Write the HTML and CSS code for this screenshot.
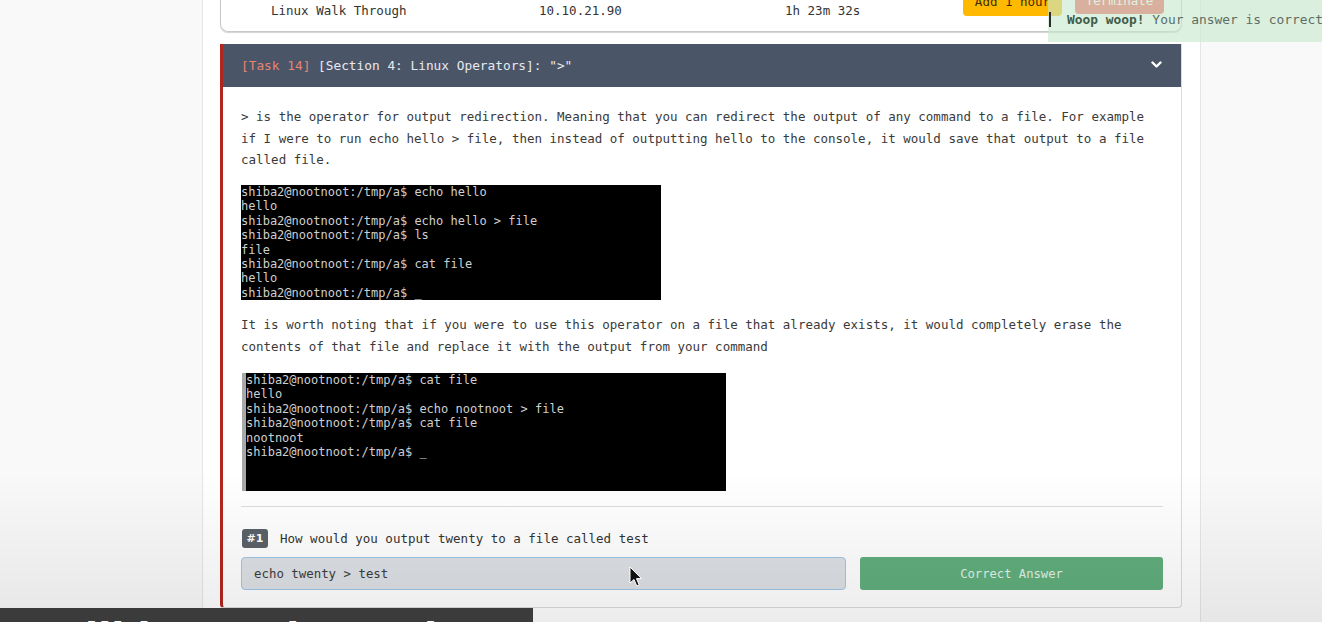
FILE: index.html
```html
<!DOCTYPE html>
<html lang="en">
<head>
<meta charset="utf-8">
<title>Task 14 - Linux Operators</title>
<link rel="stylesheet" href="styles.css">
</head>
<body>
<div class="page">
  <main class="main">
    <div class="machine-card">
      <span class="machine-name">Linux Walk Through</span>
      <span class="machine-ip">10.10.21.90</span>
      <span class="machine-time">1h 23m 32s</span>
      <div class="machine-actions">
        <button class="btn-add">Add 1 hour</button>
        <button class="btn-term">Terminate</button>
      </div>
    </div>

    <section class="task">
      <header class="task-head">
        <div class="task-title"><span class="task-no">[Task 14]</span> [Section 4: Linux Operators]: "&gt;"</div>
        <svg class="chev" width="11" height="8" viewBox="0 0 11 8"><path d="M1.5 1.5 L5.5 5.5 L9.5 1.5" fill="none" stroke="#ffffff" stroke-width="2.4" stroke-linecap="round" stroke-linejoin="round"/></svg>
      </header>
      <div class="task-body">
        <p class="para">&gt; is the operator for output redirection. Meaning that you can redirect the output of any command to a file. For example if I were to run echo hello &gt; file, then instead of outputting hello to the console, it would save that output to a file called file.</p>
        <pre class="term term-1">shiba2@nootnoot:/tmp/a$ echo hello
hello
shiba2@nootnoot:/tmp/a$ echo hello &gt; file
shiba2@nootnoot:/tmp/a$ ls
file
shiba2@nootnoot:/tmp/a$ cat file
hello
shiba2@nootnoot:/tmp/a$ _</pre>
        <p class="para para-2">It is worth noting that if you were to use this operator on a file that already exists, it would completely erase the contents of that file and replace it with the output from your command</p>
        <pre class="term term-2">shiba2@nootnoot:/tmp/a$ cat file
hello
shiba2@nootnoot:/tmp/a$ echo nootnoot &gt; file
shiba2@nootnoot:/tmp/a$ cat file
nootnoot
shiba2@nootnoot:/tmp/a$ _</pre>
        <div class="sep"></div>
        <div class="question">
          <span class="q-badge">#1</span>
          <span class="q-text">How would you output twenty to a file called test</span>
        </div>
        <div class="answer-row">
          <div class="answer-input">echo twenty &gt; test</div>
          <button class="answer-btn">Correct Answer</button>
        </div>
      </div>
    </section>
  </main>
</div>

<div class="toast"><span class="toast-bar"></span><b>Woop woop!</b> Your answer is correct</div>

<div class="shade"></div>

<svg class="cursor" width="14" height="22" viewBox="0 0 14 22"><path d="M1 1 L1 17 L5 13.5 L7.8 20 L10.2 19 L7.5 12.6 L12.5 12.6 Z" fill="#111" stroke="#fff" stroke-width="1"/></svg>

<div class="caption"><span class="caption-text">will let me just take</span></div>
</body>
</html>
```

FILE: styles.css
```css
* { box-sizing: border-box; }

html, body {
  margin: 0;
  padding: 0;
  width: 1322px;
  height: 622px;
  overflow: hidden;
  background: #f9f9f9;
  font-family: "DejaVu Sans Mono", "Liberation Mono", monospace;
  color: #363636;
}

.page {
  display: flex;
  padding-left: 202px;
  height: 622px;
}

.main {
  width: 999px;
  height: 640px;
  background: #ffffff;
  border-left: 1px solid #e6e6e6;
  border-right: 1px solid #e6e6e6;
  padding: 0 18px 0 17px;
}

/* machine card */
.machine-card {
  margin-top: -30px;
  height: 62px;
  border: 1px solid #c9c9c9;
  border-top: none;
  border-radius: 0 0 8px 8px;
  box-shadow: 0 1px 1px rgba(0,0,0,0.18);
  display: grid;
  grid-template-columns: 268px 246px 178px 1fr;
  align-items: end;
  padding: 0 0 9px 50px;
  font-size: 12.5px;
  color: #333;
}
.machine-card > span { line-height: 22px; }
.machine-actions {
  display: flex;
  align-items: flex-start;
  gap: 13px;
  align-self: end;
  margin-bottom: 6px;
}
.btn-add, .btn-term {
  font-family: "DejaVu Sans Mono", monospace;
  font-size: 12.5px;
  border: none;
  border-radius: 4px;
  height: 30px;
  padding: 0;
}
.btn-add {
  width: 99px;
  background: #ffb900;
  color: #3a2d00;
}
.btn-term {
  width: 89px;
  height: 28px;
  background: #f4554c;
  color: #ffffff;
}

/* task panel */
.task {
  margin-top: 12px;
  border-left: 3px solid #b3261e;
  border-right: 1px solid #dcdcdc;
  border-bottom: 1px solid #dcdcdc;
  border-radius: 0 0 4px 4px;
  background: #ffffff;
}
.task-head {
  height: 43px;
  background: #4b5568;
  display: flex;
  align-items: center;
  justify-content: space-between;
  padding: 0 19px 0 18px;
}
.task-title {
  font-size: 12.8px;
  color: #e7e9ef;
}
.task-no { color: #e5856f; }
.chev { display: block; margin-top: -2px; }

.task-body {
  padding: 19px 18px 17px 18px;
}
.para {
  margin: 0;
  font-size: 12.5px;
  line-height: 21.5px;
  color: #3a3a3a;
}
.para-2 { margin-top: 14px; }

.term {
  margin: 14.5px 0 0 0;
  background: #000000;
  color: #cfcfcf;
  font-family: "DejaVu Sans Mono", monospace;
  font-size: 12px;
  line-height: 14.4px;
  white-space: pre;
  overflow: hidden;
}
.term-1 {
  width: 420px;
  height: 115px;
  padding: 0;
}
.term-2 {
  margin-top: 16px;
  margin-left: 1px;
  width: 484px;
  height: 118px;
  border-left: 4px solid #a8a8a8;
  padding: 0;
  margin-bottom: 0;
}

.sep {
  margin-top: 15px;
  height: 1px;
  background: #dedede;
}

.question {
  margin-top: 22px;
  display: flex;
  align-items: center;
  gap: 12px;
}
.q-badge {
  margin-left: 1px;
  width: 26px;
  height: 19px;
  background: #5b6168;
  color: #ffffff;
  font-family: "DejaVu Sans", sans-serif;
  font-weight: bold;
  font-size: 11px;
  border-radius: 3px;
  display: flex;
  align-items: center;
  justify-content: center;
}
.q-text {
  font-size: 12.5px;
  color: #333;
}

.answer-row {
  margin-top: 9px;
  display: flex;
  gap: 14px;
}
.answer-input {
  width: 605px;
  height: 33px;
  background: #dde0e4;
  border: 1px solid #9fc6e8;
  border-radius: 4px;
  padding: 0 12px;
  display: flex;
  align-items: center;
  font-size: 12.4px;
  color: #3c3c3c;
}
.answer-btn {
  flex: 1;
  height: 33px;
  border: none;
  border-radius: 3px;
  background: #60ae7c;
  color: #e3f2e7;
  font-family: "DejaVu Sans Mono", monospace;
  font-size: 12.2px;
}

/* overlays */
.toast {
  position: absolute;
  left: 1048px;
  top: 0;
  width: 274px;
  height: 42px;
  background: rgba(200, 232, 206, 0.62);
  font-size: 12.9px;
  color: #5c6e62;
  padding: 12px 0 0 19px;
  white-space: nowrap;
  overflow: hidden;
}
.toast b { color: #3f5d49; }
.toast-bar {
  position: absolute;
  left: 1px;
  top: 12px;
  width: 2px;
  height: 15px;
  background: #2c2c2c;
}

.shade {
  position: absolute;
  left: 0;
  top: 0;
  width: 1322px;
  height: 622px;
  pointer-events: none;
  background: linear-gradient(to bottom, rgba(0,0,0,0) 0px, rgba(0,0,0,0) 470px, rgba(0,0,0,0.075) 622px);
}

.cursor {
  position: absolute;
  left: 629px;
  top: 566px;
}

.caption {
  position: absolute;
  left: 0;
  top: 608px;
  width: 533px;
  height: 14px;
  background: #3b3b3b;
  overflow: hidden;
}
.caption-text {
  display: block;
  padding: 9px 0 0 50px;
  font-family: "DejaVu Sans", sans-serif;
  font-weight: bold;
  font-size: 38px;
  line-height: 38px;
  color: #ffffff;
  white-space: nowrap;
}
```
